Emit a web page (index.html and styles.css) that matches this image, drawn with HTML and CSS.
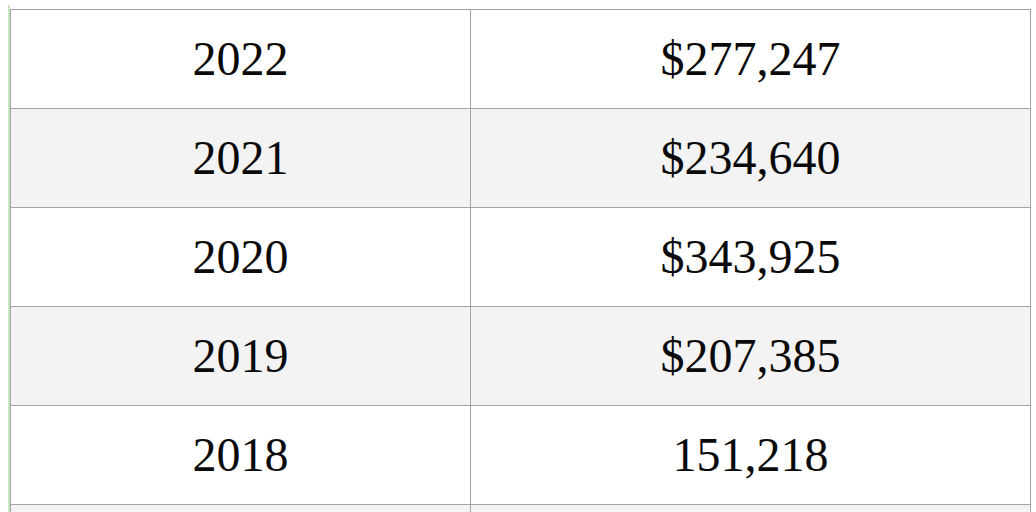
FILE: index.html
```html
<!DOCTYPE html>
<html>
<head>
<meta charset="utf-8">
<link rel="stylesheet" href="styles.css">
</head>
<body>
<div class="frame">
  <table class="data">
    <tbody>
      <tr><td class="year">2022</td><td class="amt">$277,247</td></tr>
      <tr><td class="year">2021</td><td class="amt">$234,640</td></tr>
      <tr><td class="year">2020</td><td class="amt">$343,925</td></tr>
      <tr><td class="year">2019</td><td class="amt">$207,385</td></tr>
      <tr><td class="year">2018</td><td class="amt">151,218</td></tr>
      <tr class="stub"><td class="year"></td><td class="amt"></td></tr>
    </tbody>
  </table>
</div>
</body>
</html>
```
FILE: styles.css
```css
html, body {
  margin: 0;
  padding: 0;
  background: #ffffff;
  overflow: hidden;
}
.frame {
  margin-left: 8px;
  margin-top: 5px;
  border-left: 2px solid #c9e4c0;
  padding-top: 4px;
  width: 1022px;
}
.data {
  border-collapse: collapse;
  width: 1021px;
  table-layout: fixed;
  font-family: "Liberation Serif", "Times New Roman", serif;
  font-size: 48px;
  color: #0a0a0a;
}
.data td {
  border: 1px solid #a3a3a3;
  height: 98px;
  padding: 0;
  text-align: center;
  vertical-align: middle;
  line-height: 1;
}
.data td.year {
  width: 459px;
}
.data tr:nth-child(even) td {
  background: #f3f3f3;
}
.data tr.stub td {
  height: 20px;
}
```
